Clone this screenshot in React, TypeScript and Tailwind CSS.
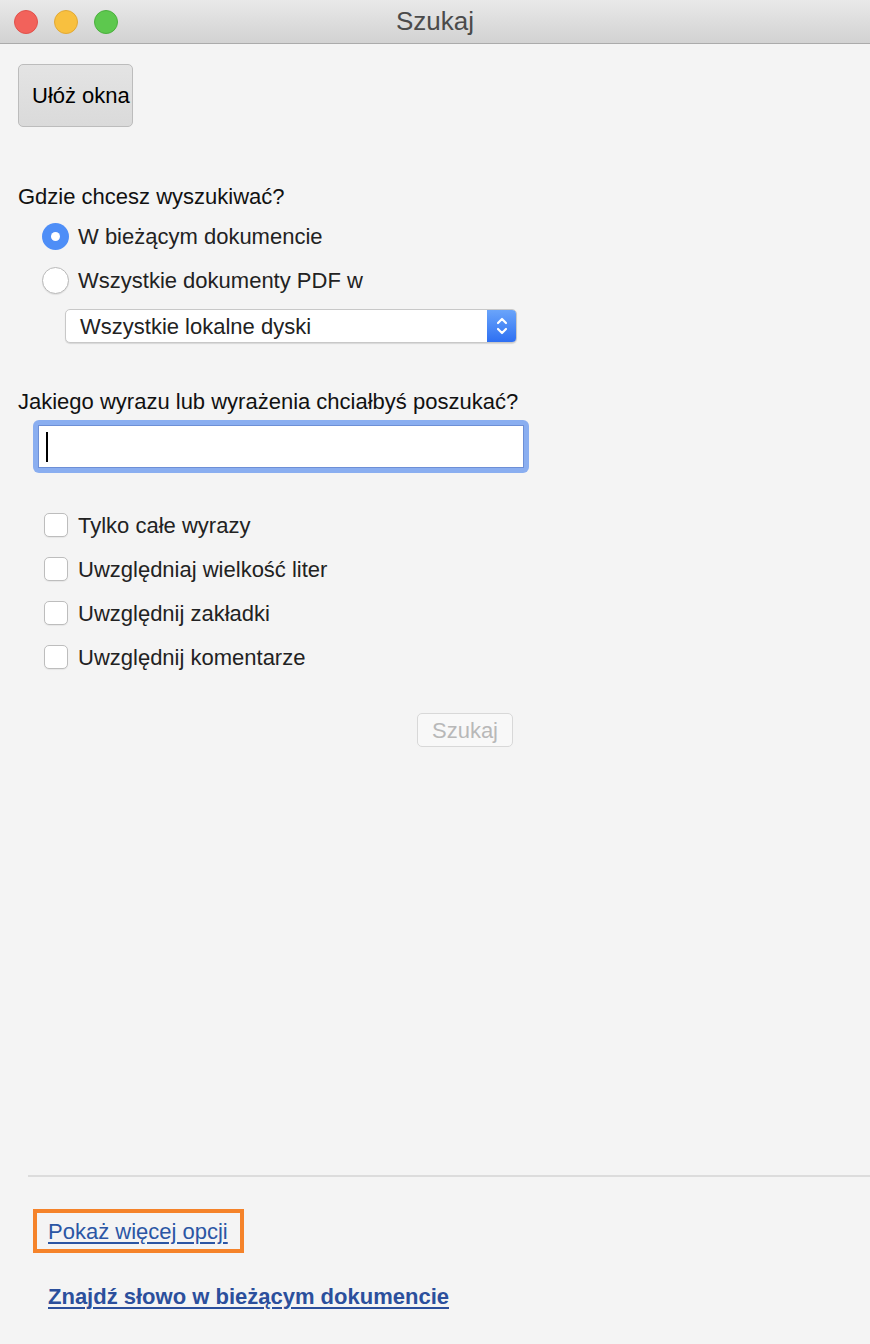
import React from "react";

const font = { fontFamily: '"Liberation Sans", Arial, sans-serif' };

function Radio({ checked, label }: { checked?: boolean; label: string }) {
  return (
    <div className="flex items-center h-[44px]">
      {checked ? (
        <div className="w-[27px] h-[27px] rounded-full bg-[#4e8ef7] flex items-center justify-center">
          <div className="w-[9px] h-[9px] rounded-full bg-white" />
        </div>
      ) : (
        <div className="w-[27px] h-[27px] rounded-full bg-white border border-[#b9b9b9] shadow-[0_1px_1px_rgba(0,0,0,0.08)]" />
      )}
      <span className="ml-[9px] text-[22px] text-[#222]">{label}</span>
    </div>
  );
}

function Check({ label }: { label: string }) {
  return (
    <div className="flex items-center h-[44px]">
      <div className="w-[24px] h-[24px] rounded-[5px] bg-white border border-[#bdbdbd] shadow-[0_1px_1px_rgba(0,0,0,0.06)]" />
      <span className="ml-[10px] text-[22px] text-[#222]">{label}</span>
    </div>
  );
}

export default function App() {
  return (
    <div style={font} className="w-[870px] h-[1344px] bg-[#f4f4f4] flex flex-col overflow-hidden">
      {/* title bar */}
      <div className="relative h-[44px] shrink-0 bg-gradient-to-b from-[#e9e9e9] to-[#d2d2d2] border-b border-[#ababab] flex items-center">
        <div className="flex items-center gap-[16px] pl-[14px]">
          <div className="w-[24px] h-[24px] rounded-full bg-[#f2625b] border border-[#e1514b]" />
          <div className="w-[24px] h-[24px] rounded-full bg-[#f8c03f] border border-[#e2a935]" />
          <div className="w-[24px] h-[24px] rounded-full bg-[#5dc84e] border border-[#4bb03e]" />
        </div>
        <div className="absolute inset-0 flex items-center justify-center text-[26px] text-[#4b4b4b] pointer-events-none">
          Szukaj
        </div>
      </div>

      <div className="flex flex-col flex-1 pl-[18px]">
        <div className="pt-[20px]">
          <div className="w-[115px] h-[63px] rounded-[5px] border border-[#bcbcbc] bg-gradient-to-b from-[#e4e4e4] to-[#dadada] flex items-center pl-[13px] text-[22px] text-black whitespace-nowrap">
            Ułóż okna
          </div>
        </div>

        <div className="mt-[57px] h-[24px] flex items-center text-[22px] text-[#111]">Gdzie chcesz wyszukiwać?</div>
        <div className="pl-[24px] mt-[6px] flex flex-col">
          <Radio checked label="W bieżącym dokumencie" />
          <Radio label="Wszystkie dokumenty PDF w" />
        </div>
        <div className="pl-[47px] mt-[7px]">
          <div className="w-[452px] h-[34px] flex rounded-[5px] bg-white border border-[#c8c8c8] shadow-[0_1px_1px_rgba(0,0,0,0.12)] overflow-hidden">
            <div className="flex-1 flex items-center pl-[14px] text-[22px] text-[#222]">Wszystkie lokalne dyski</div>
            <div className="w-[29px] bg-gradient-to-b from-[#6aa4fa] to-[#2e6ff2] flex items-center justify-center">
              <svg width="14" height="22" viewBox="0 0 14 22" fill="none" stroke="white" strokeWidth="2.2" strokeLinecap="round" strokeLinejoin="round">
                <path d="M3 8 L7 4 L11 8" />
                <path d="M3 14 L7 18 L11 14" />
              </svg>
            </div>
          </div>
        </div>

        <div className="mt-[46px] h-[24px] flex items-center text-[22px] text-[#111]">Jakiego wyrazu lub wyrażenia chciałbyś poszukać?</div>
        <div className="pl-[15px] mt-[7px]">
          <div className="w-[496px] h-[53px] rounded-[6px] bg-[#8aaef0] p-[5px]">
            <div className="w-full h-full bg-white border border-[#6d8fd6] flex items-center pl-[7px]">
              <div className="w-[2px] h-[30px] bg-black" />
            </div>
          </div>
        </div>

        <div className="pl-[26px] mt-[30px] flex flex-col">
          <Check label="Tylko całe wyrazy" />
          <Check label="Uwzględniaj wielkość liter" />
          <Check label="Uwzględnij zakładki" />
          <Check label="Uwzględnij komentarze" />
        </div>

        <div className="mt-[34px] pl-[399px]">
          <div className="w-[96px] h-[34px] rounded-[5px] border border-[#d8d8d8] bg-[#f8f8f8] flex items-center justify-center text-[22px] text-[#b8b8b8]">
            Szukaj
          </div>
        </div>

        <div className="flex-1" />

        <div className="ml-[10px] border-t-2 border-[#dcdcdc]" />
        <div className="mt-[32px] ml-[15px] w-[211px] h-[44px] border-[4px] border-[#f5832a] flex items-center pl-[11px] pt-[2px]">
          <span className="text-[22px] leading-[24px] text-[#2b56a4] underline underline-offset-[3px] whitespace-nowrap">Pokaż więcej opcji</span>
        </div>
        <div className="mt-[32px] ml-[30px] h-[24px] flex items-center">
          <span className="text-[22px] leading-[24px] font-bold text-[#2b4f9c] underline underline-offset-[3px] whitespace-nowrap">Znajdź słowo w bieżącym dokumencie</span>
        </div>
        <div className="h-[35px] shrink-0" />
      </div>
    </div>
  );
}
